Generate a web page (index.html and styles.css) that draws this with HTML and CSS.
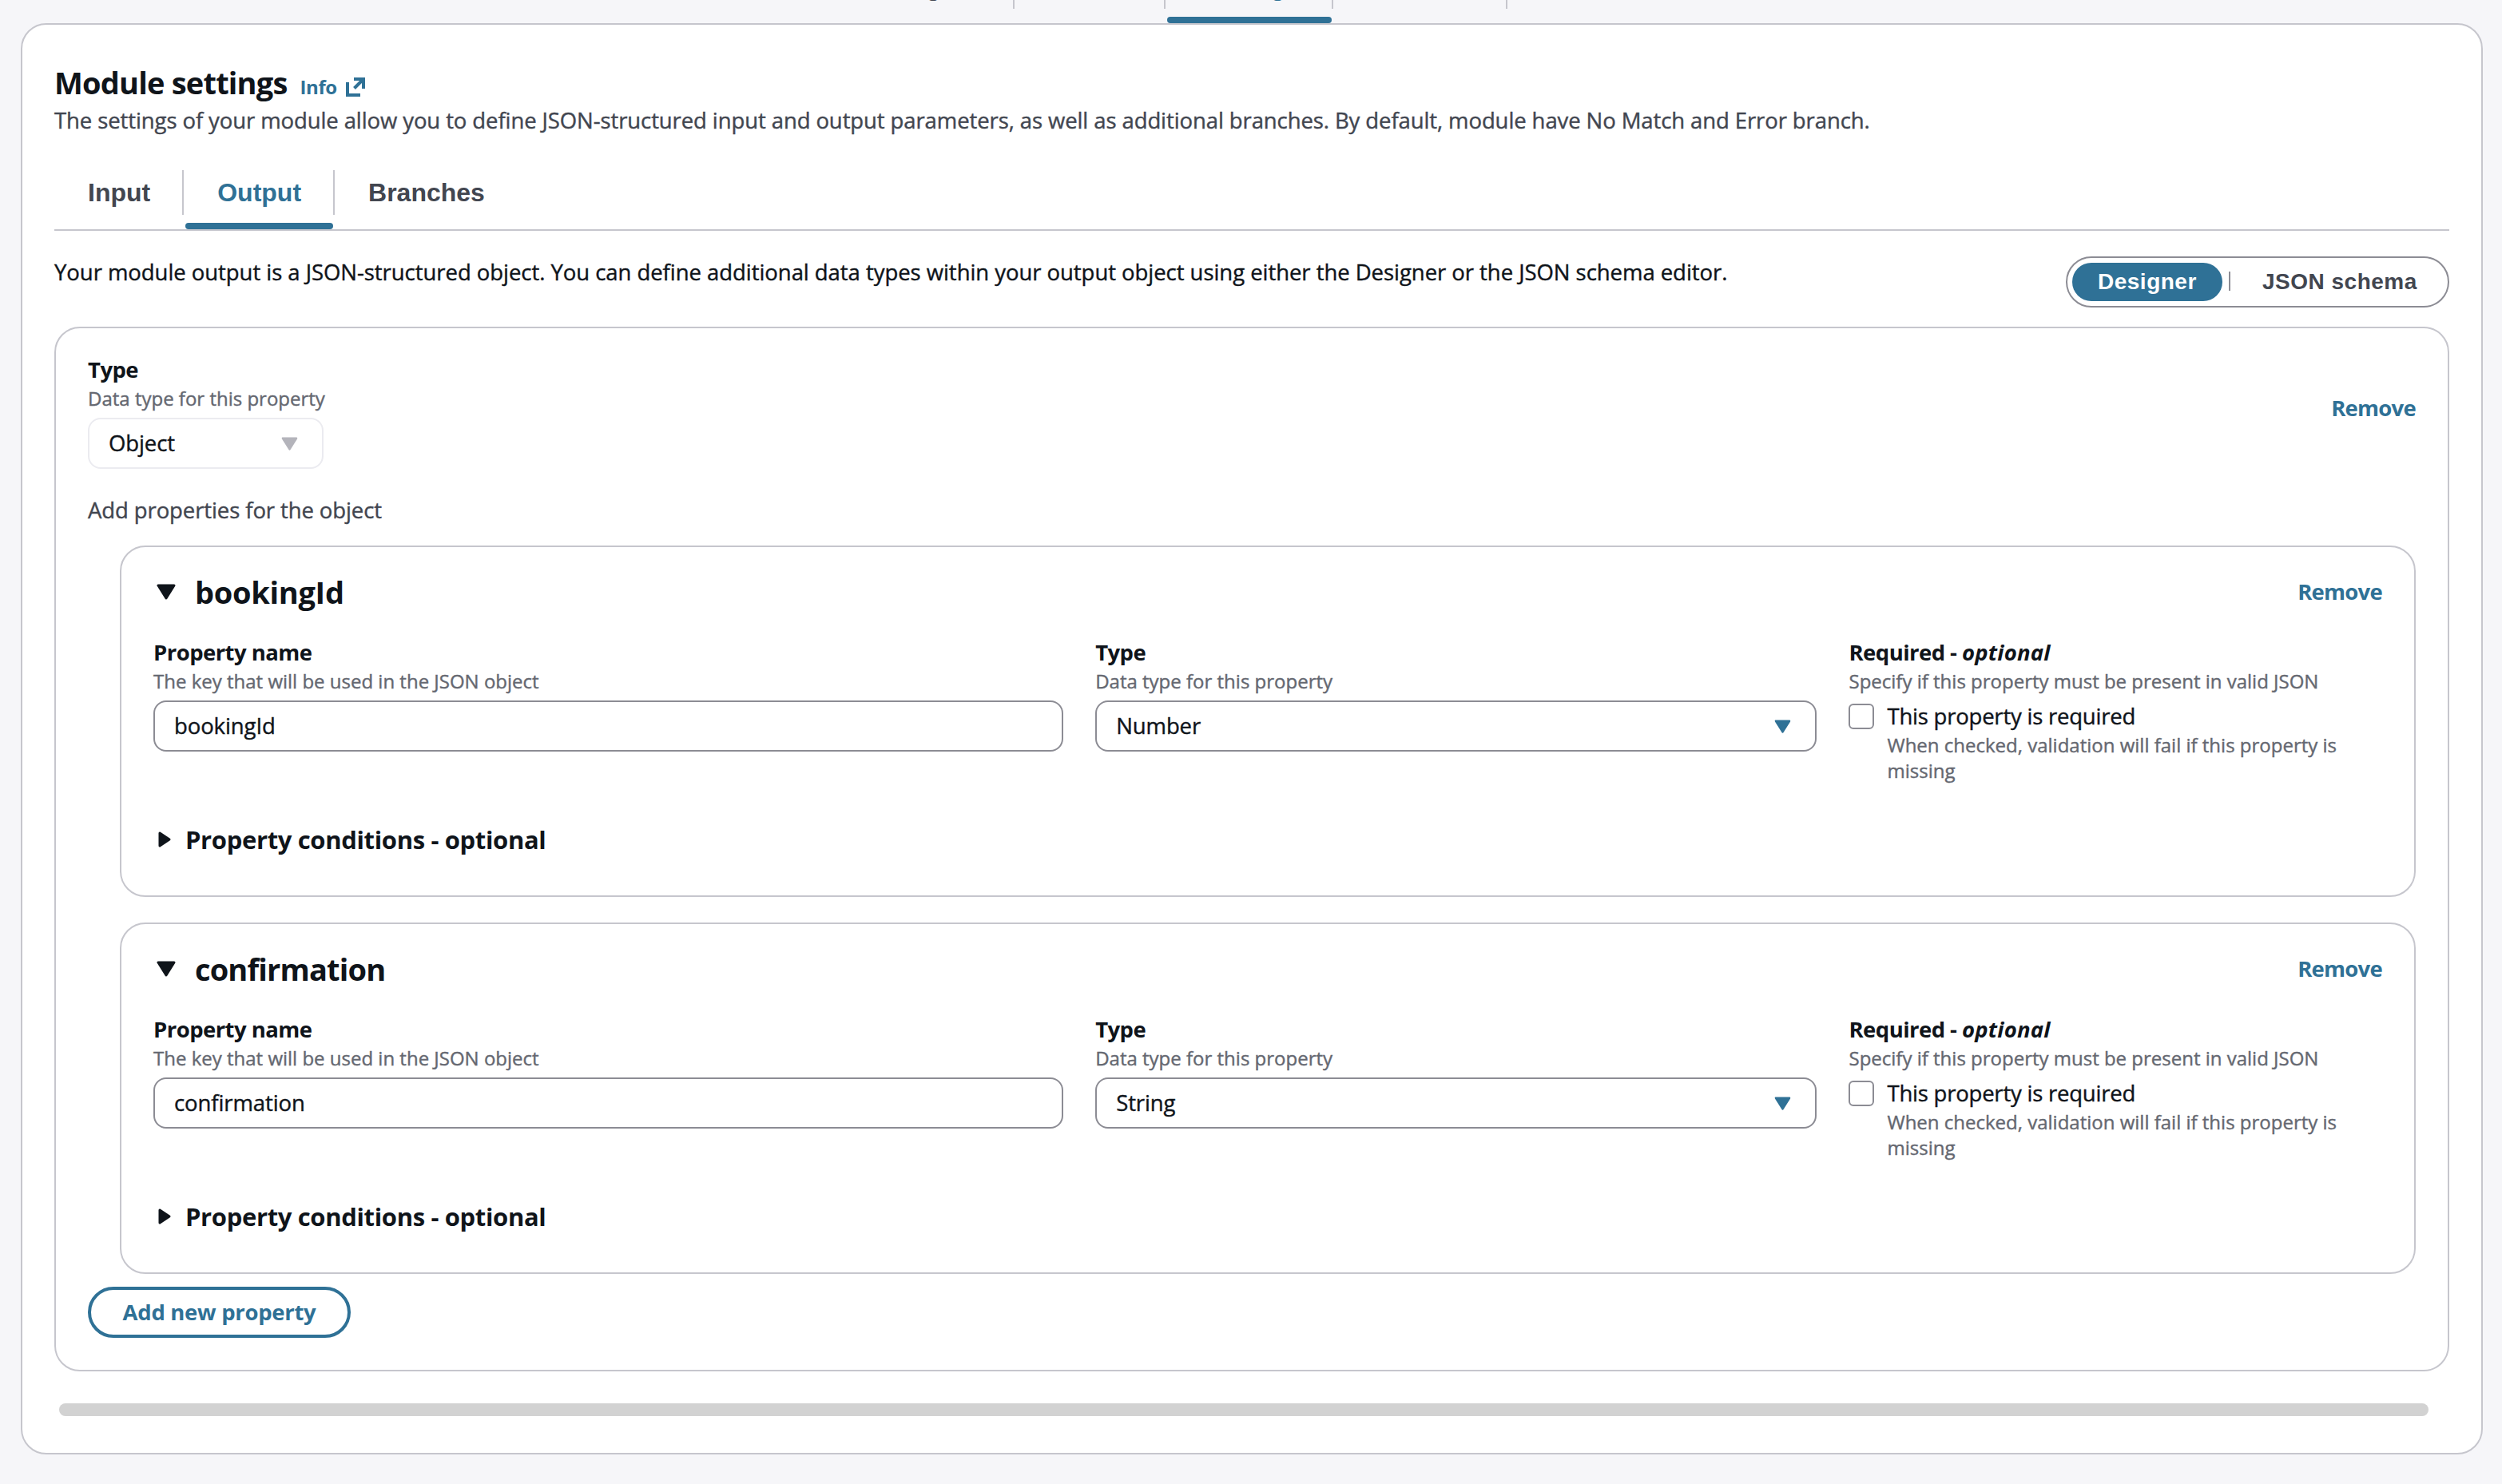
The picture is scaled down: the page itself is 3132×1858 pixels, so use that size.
FILE: index.html
```
<!DOCTYPE html>
<html lang="en">

<head>
    <meta charset="UTF-8">
    <meta name="viewport" content="width=device-width, initial-scale=1.0">
    <title>Module settings</title>
    <link rel="stylesheet" href="styles.css">
</head>

<body>
    <nav class="page-tabs">
        <a class="tab">Designer</a>
        <a class="tab">Details</a>
        <a class="tab selected">Settings</a>
        <a class="tab">Versions</a>
        <a class="tab">Aliases</a>
    </nav>

    <main class="container">
        <header class="heading">
            <h2>Module settings</h2>
            <a class="info">Info
                <svg class="icon-external" viewBox="0 0 24 24">
                    <path d="M2 6V22H18M10 2H22V14M22 2L10.5 13.5" />
                </svg>
            </a>
        </header>
        <p class="description">The settings of your module allow you to define JSON-structured input and output parameters, as well as additional branches. By default, module have No Match and Error branch.</p>

        <nav class="tabs">
            <a class="tab">Input</a>
            <a class="tab selected">Output</a>
            <a class="tab">Branches</a>
        </nav>

        <div class="toolbar">
            <p class="intro">Your module output is a JSON-structured object. You can define additional data types within your output object using either the Designer or the JSON schema editor.</p>
            <div class="segmented">
                <span class="segment active">Designer</span>
                <span class="segment">JSON schema</span>
            </div>
        </div>

        <section class="panel">
            <div class="panel-header">
                <div class="field">
                    <div class="label">Type</div>
                    <div class="hint">Data type for this property</div>
                    <div class="control disabled">
                        Object
                        <svg class="caret" viewBox="0 0 24 20"><path d="M2 2H22L12 18Z" /></svg>
                    </div>
                </div>
                <a class="remove">Remove</a>
            </div>

            <p class="add-text">Add properties for the object</p>

            <div class="properties">
                <article class="card">
                    <div class="card-header">
                        <svg class="toggle" viewBox="0 0 24 20"><path d="M2 2H22L12 18Z" /></svg>
                        <h3 class="id-name">bookingId</h3>
                        <a class="remove">Remove</a>
                    </div>
                    <div class="grid">
                        <div class="field name">
                            <div class="label">Property name</div>
                            <div class="hint">The key that will be used in the JSON object</div>
                            <div class="control">bookingId</div>
                        </div>
                        <div class="field type">
                            <div class="label">Type</div>
                            <div class="hint">Data type for this property</div>
                            <div class="control">
                                Number
                                <svg class="caret" viewBox="0 0 24 20"><path d="M2 2H22L12 18Z" /></svg>
                            </div>
                        </div>
                        <div class="field required">
                            <div class="label">Required - <i>optional</i></div>
                            <div class="hint">Specify if this property must be present in valid JSON</div>
                            <div class="check">
                                <span class="box"></span>
                                <div>
                                    <div class="check-label">This property is required</div>
                                    <div class="check-hint">When checked, validation will fail if this property is missing</div>
                                </div>
                            </div>
                        </div>
                    </div>
                    <div class="conditions">
                        <svg class="expand" viewBox="0 0 16 20"><path d="M2 2V18L14 10Z" /></svg>
                        <span>Property conditions - optional</span>
                    </div>
                </article>

                <article class="card">
                    <div class="card-header">
                        <svg class="toggle" viewBox="0 0 24 20"><path d="M2 2H22L12 18Z" /></svg>
                        <h3>confirmation</h3>
                        <a class="remove">Remove</a>
                    </div>
                    <div class="grid">
                        <div class="field name">
                            <div class="label">Property name</div>
                            <div class="hint">The key that will be used in the JSON object</div>
                            <div class="control">confirmation</div>
                        </div>
                        <div class="field type">
                            <div class="label">Type</div>
                            <div class="hint">Data type for this property</div>
                            <div class="control">
                                String
                                <svg class="caret" viewBox="0 0 24 20"><path d="M2 2H22L12 18Z" /></svg>
                            </div>
                        </div>
                        <div class="field required">
                            <div class="label">Required - <i>optional</i></div>
                            <div class="hint">Specify if this property must be present in valid JSON</div>
                            <div class="check">
                                <span class="box"></span>
                                <div>
                                    <div class="check-label">This property is required</div>
                                    <div class="check-hint">When checked, validation will fail if this property is missing</div>
                                </div>
                            </div>
                        </div>
                    </div>
                    <div class="conditions">
                        <svg class="expand" viewBox="0 0 16 20"><path d="M2 2V18L14 10Z" /></svg>
                        <span>Property conditions - optional</span>
                    </div>
                </article>
            </div>

            <button class="add-button">Add new property</button>
        </section>

        <div class="scrollbar"></div>
    </main>
</body>

</html>
```
FILE: styles.css
```
* {
    box-sizing: border-box;
}

body {
    margin: 0;
    height: 1858px;
    overflow: hidden;
    background-color: #f6f6f9;
    color: #0f141a;
    font-family: "Open Sans", "Noto Sans", sans-serif;
    font-size: 27.5px;
    line-height: 40px;
}

h2, h3, p {
    margin: 0;
}

h2, h3 {
    font-size: 38px;
    line-height: 48px;
    letter-spacing: -0.85px;
}

svg {
    display: block;
    flex: none;
}

/* regular text is drawn a little heavier */
.description,
.intro,
.hint,
.control,
.add-text,
.check-label,
.check-hint {
    -webkit-text-stroke: 0.4px;
}

/* tabs */
.tabs,
.page-tabs {
    display: flex;
    font: bold 32px/56px "Liberation Sans", Arial, sans-serif;
    color: #424650;
}

.page-tabs {
    height: 29px;
    align-items: flex-end;
    padding-left: 1049px;
}

.tabs {
    margin-top: 42px;
    border-bottom: 2px solid #c6c6cd;
}

.tab {
    position: relative;
    padding: 0 40px 0 42px;
    margin-bottom: 18px;
    border-right: 2px solid #c6c6cd;
}

.tab:last-child {
    border-right: none;
}

.selected {
    color: #2f7196;
}

/* bar under the selected tab */
.selected::after {
    content: '';
    position: absolute;
    left: 2px;
    right: 0;
    bottom: -18px;
    height: 8px;
    border-radius: 4px;
    background-color: #2f7196;
}

/* main container */
.container {
    margin: 0 24px 0 26px;
    height: 1792px;
    padding: 48px 40px 0;
    border: 2px solid #c6c6cd;
    border-radius: 32px;
    background-color: #fff;
}

.heading {
    display: flex;
    align-items: baseline;
}

.heading h2 {
    letter-spacing: -0.8px;
}

.info {
    display: flex;
    align-items: center;
    gap: 11px;
    margin-left: 16px;
    color: #2f7196;
    font-size: 24px;
    font-weight: bold;
    line-height: 32px;
    letter-spacing: -0.4px;
}

.icon-external {
    width: 24px;
    height: 24px;
    fill: none;
    stroke: #2f7196;
    stroke-width: 4;
}

.description {
    margin-top: 4px;
    color: #424650;
    letter-spacing: -0.1px;
}

.toolbar {
    display: flex;
    justify-content: space-between;
    margin-top: 32px;
}

.intro {
    line-height: 40px;
    letter-spacing: -0.05px;
}

.segmented {
    display: flex;
    align-items: center;
    width: 480px;
    height: 64px;
    padding: 6px;
    border: 2px solid #8c8c94;
    border-radius: 32px;
    font: bold 28px/48px "Liberation Sans", Arial, sans-serif;
    letter-spacing: 0.5px;
}

.segment {
    padding-left: 40px;
    color: #424650;
}

.segment.active {
    width: 188px;
    padding-left: 32px;
    border-radius: 24px;
    background-color: #2f7196;
    color: #fff;
}

.segment.active + .segment::before {
    content: '';
    display: inline-block;
    width: 2px;
    height: 24px;
    margin: 0 40px 0 -32px;
    background-color: #8c8c94;
    vertical-align: -2px;
}

/* output object */
.panel {
    height: 1308px;
    margin-top: 24px;
    padding: 32px 40px 40px;
    border: 2px solid #c6c6cd;
    border-radius: 32px;
}

.panel-header {
    display: flex;
    justify-content: space-between;
}

.panel-header .field {
    width: 295px;
}

.panel-header .remove {
    margin-top: 48px;
}

.remove {
    color: #2f7196;
    font-weight: bold;
    letter-spacing: -0.75px;
}

.label {
    font-weight: bold;
    letter-spacing: -0.55px;
}

.label i {
    letter-spacing: 0.2px;
}

.hint,
.check-hint {
    color: #656871;
    font-size: 24px;
    line-height: 32px;
}

.hint {
    white-space: nowrap;
}

.control {
    display: flex;
    align-items: center;
    justify-content: space-between;
    height: 64px;
    margin-top: 8px;
    padding: 0 30px 0 24px;
    border: 2px solid #8c8c94;
    border-radius: 16px;
    letter-spacing: -0.1px;
}

.disabled {
    border-color: #ebebf0;
}

.caret {
    width: 21px;
    height: 17px;
    fill: #2f7196;
    stroke: #2f7196;
    stroke-width: 3;
    stroke-linejoin: round;
}

.disabled .caret {
    fill: #b4b4bb;
    stroke: #b4b4bb;
}

.add-text {
    margin-top: 32px;
    color: #424650;
    letter-spacing: -0.1px;
}

.properties {
    display: flex;
    flex-direction: column;
    gap: 32px;
    margin: 24px 0 16px 40px;
}

.card {
    height: 440px;
    padding: 32px 40px 0;
    border: 2px solid #c6c6cd;
    border-radius: 32px;
}

.card-header {
    display: flex;
    align-items: center;
}

.card-header .remove {
    margin-left: auto;
}

.toggle {
    width: 24px;
    height: 20px;
    margin: 0 24px 0 4px;
}

.toggle,
.expand {
    fill: #0f141a;
    stroke: #0f141a;
    stroke-width: 3;
    stroke-linejoin: round;
}

.id-name {
    letter-spacing: -0.3px;
}

.grid {
    display: grid;
    grid-template-columns: repeat(12, 1fr);
    column-gap: 40px;
    margin-top: 32px;
}

.name {
    grid-column: span 5;
}

.type {
    grid-column: span 4;
}

.required {
    grid-column: span 3;
}

.check {
    display: flex;
    gap: 16px;
    margin-top: 8px;
}

.box {
    flex: none;
    width: 32px;
    height: 32px;
    margin-top: 4px;
    border: 2px solid #8c8c94;
    border-radius: 6px;
}

.check-label {
    letter-spacing: -0.22px;
}

.conditions {
    display: flex;
    align-items: center;
    gap: 18px;
    margin: 50px 0 0 6px;
    font-size: 31px;
    font-weight: bold;
    letter-spacing: -0.35px;
}

.expand {
    width: 16px;
    height: 20px;
}

.add-button {
    display: block;
    width: 329px;
    height: 64px;
    padding: 0;
    border: 4px solid #2f7196;
    border-radius: 32px;
    background: none;
    color: #2f7196;
    font: bold 27.5px/40px "Open Sans", "Noto Sans", sans-serif;
    letter-spacing: -0.3px;
}

.scrollbar {
    height: 16px;
    margin: 40px 26px 0 6px;
    border-radius: 8px;
    background-color: #d2d2d2;
}
```
